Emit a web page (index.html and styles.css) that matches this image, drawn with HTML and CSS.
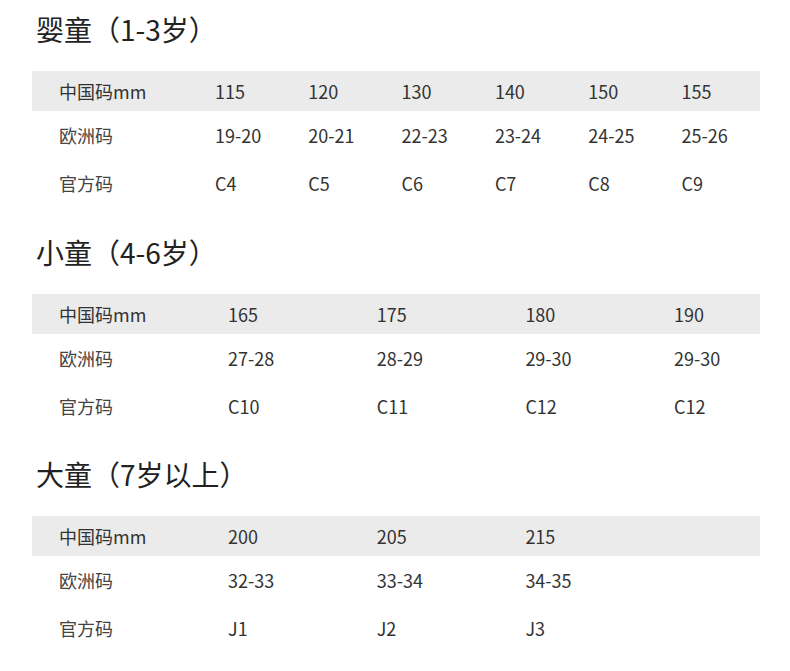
FILE: index.html
```html
<!DOCTYPE html>
<html lang="zh-CN">
<head>
<meta charset="utf-8">
<link rel="stylesheet" href="styles.css">
</head>
<body>
<div class="page">
  <section class="section">
    <h2 class="title">婴童（1-3岁）</h2>
    <div class="table t6">
      <div class="row head"><span>中国码mm</span><span>115</span><span>120</span><span>130</span><span>140</span><span>150</span><span>155</span></div>
      <div class="row"><span class="lbl">欧洲码</span><span>19-20</span><span>20-21</span><span>22-23</span><span>23-24</span><span>24-25</span><span>25-26</span></div>
      <div class="row"><span class="lbl">官方码</span><span>C4</span><span>C5</span><span>C6</span><span>C7</span><span>C8</span><span>C9</span></div>
    </div>
  </section>
  <section class="section">
    <h2 class="title">小童（4-6岁）</h2>
    <div class="table t4">
      <div class="row head"><span>中国码mm</span><span>165</span><span>175</span><span>180</span><span>190</span></div>
      <div class="row"><span class="lbl">欧洲码</span><span>27-28</span><span>28-29</span><span>29-30</span><span>29-30</span></div>
      <div class="row"><span class="lbl">官方码</span><span>C10</span><span>C11</span><span>C12</span><span>C12</span></div>
    </div>
  </section>
  <section class="section">
    <h2 class="title">大童（7岁以上）</h2>
    <div class="table t4">
      <div class="row head"><span>中国码mm</span><span>200</span><span>205</span><span>215</span><span></span></div>
      <div class="row"><span class="lbl">欧洲码</span><span>32-33</span><span>33-34</span><span>34-35</span><span></span></div>
      <div class="row"><span class="lbl">官方码</span><span>J1</span><span>J2</span><span>J3</span><span></span></div>
    </div>
  </section>
</div>
</body>
</html>
```
FILE: styles.css
```css
* { box-sizing: border-box; }
html, body { margin: 0; padding: 0; background: #ffffff; }
body {
  font-family: "Noto Sans CJK SC", "Noto Sans", sans-serif;
  color: #333333;
}
.page {
  width: 790px;
  padding: 9px 0 0 0;
  display: flex;
  flex-direction: column;
  gap: 24.5px;
}
.title {
  margin: 0 0 22px 0;
  padding-left: 36px;
  font-size: 28px;
  line-height: 40px;
  height: 40px;
  font-weight: 400;
  color: #222222;
}
.table {
  margin-left: 32px;
  width: 728px;
  display: flex;
  flex-direction: column;
}
.row {
  display: grid;
  height: 48px;
  align-items: center;
  padding-left: 27px;
  font-size: 18px;
  line-height: 24px;
  color: #333333;
}
.row.head {
  height: 40px;
  background: #ebebeb;
}
.t6 .row { grid-template-columns: 156px repeat(5, 93.3px) 1fr; }
.t4 .row { grid-template-columns: 169px repeat(3, 148.7px) 1fr; }
.lbl { color: #444444; }
```
